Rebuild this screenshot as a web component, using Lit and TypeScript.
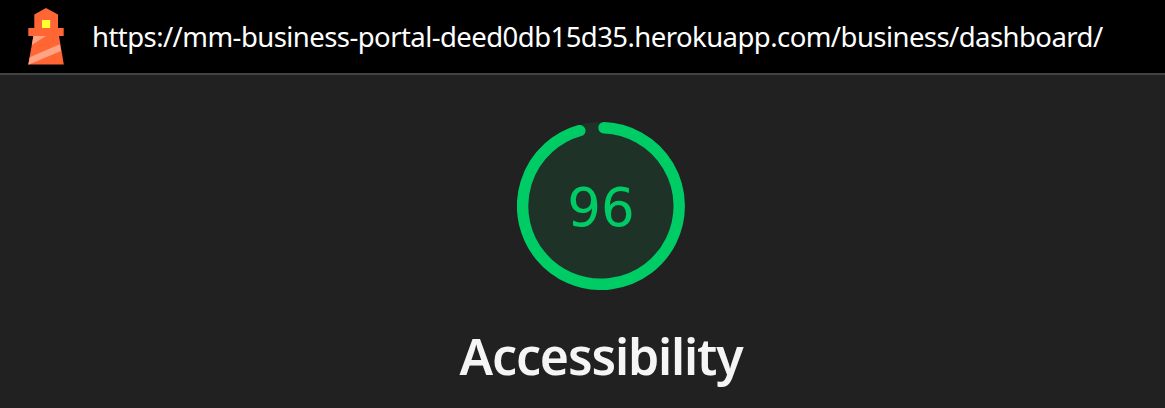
import { LitElement, html, css } from "lit";
import { customElement, property } from "lit/decorators.js";

@customElement("score-gauge")
class ScoreGauge extends LitElement {
  @property({ type: Number }) score = 0;

  static styles = css`
    :host { display: grid; width: 168px; height: 168px; place-items: center; }
    svg, .value { grid-area: 1 / 1; }
    svg { display: block; }
    .base { fill: #1e3228; }
    .arc { fill: none; stroke: #00cc66; stroke-width: 11.4; stroke-linecap: round; }
    .value { font: 53px/60px "DejaVu Sans", sans-serif; padding-top: 3px; color: #00cc66; }
  `;

  render() {
    return html`
      <svg width="168" height="168" viewBox="0 0 168 168" aria-hidden="true">
        <circle class="base" cx="84" cy="84" r="84" />
        <path class="arc" d="M87 5.76A78.3 78.3 0 1 1 62.8 8.6" />
      </svg>
      <span class="value">${this.score}</span>
    `;
  }
}

@customElement("app-root")
class AppRoot extends LitElement {
  static styles = css`
    :host { display: block; height: 408px; background: #212121; overflow: hidden; }
    .topbar {
      display: flex; align-items: center; box-sizing: border-box; height: 75px;
      padding-left: 28px; background: #000; border-bottom: 2px solid #424242;
    }
    .logo { display: block; flex: none; width: 36px; height: 73px; }
    .url {
      margin-left: 28px; white-space: nowrap; color: #fff;
      font: 27.5px/40px "Noto Sans", sans-serif; letter-spacing: -0.56px;
    }
    main { display: flex; flex-direction: column; align-items: center; padding: 47px 0 0 37px; }
    h1 {
      margin: 32px 0 0; color: #f5f5f5; white-space: nowrap;
      font: 600 50px/68px "Noto Sans", sans-serif; letter-spacing: -1.15px;
    }
  `;

  render() {
    return html`
      <header class="topbar">
        <svg class="logo" viewBox="28 0 36 73" aria-hidden="true">
          <path fill="#ff6633" d="M46 8l12 6.5V28h5.7v8H59l4.8 28.5H28.3L33.4 36h-5.1v-8h6V14.5z" />
          <path fill="#ffa385" d="M33.4 36h12.5L31.8 45zM59.7 44.3l1.3 6.7-32 13.5h-.7l1.5-7.2z" />
          <path fill="#ffff33" d="M42 20h8.2v8H42z" />
        </svg>
        <span class="url">https://mm-business-portal-deed0db15d35.herokuapp.com/business/dashboard/</span>
      </header>
      <main>
        <score-gauge score="96"></score-gauge>
        <h1>Accessibility</h1>
      </main>
    `;
  }
}
